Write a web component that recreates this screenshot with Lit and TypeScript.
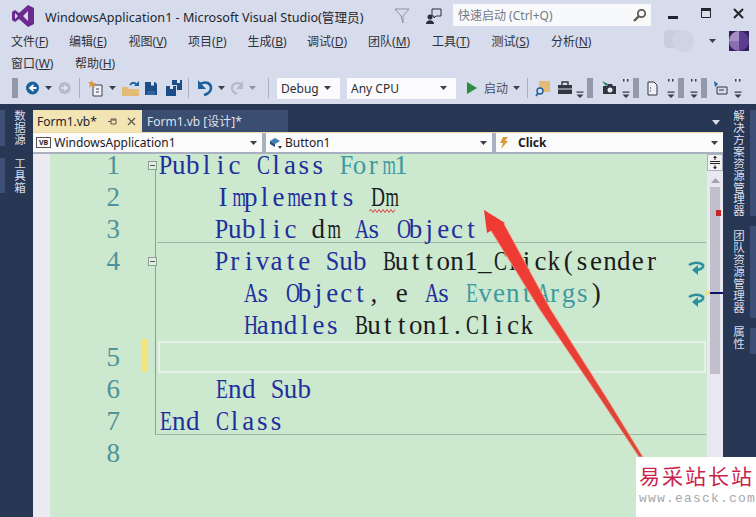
import { LitElement, html, css, svg } from "lit";
import { customElement } from "lit/decorators.js";

const caret = (c = "#3a3f4c") => html`<svg class="caret" width="7" height="4" viewBox="0 0 7 4"><path d="M0 0h7L3.500 4z" fill="${c}"/></svg>`;
const ovd = html`<svg class="ov" width="8" height="22" viewBox="0 0 8 22"><path d="M1 2h1.500v2.500H1zM5 2h1.500v2.500H5zM.5 14.500h7v1.300h-7zM.5 17.500h7L4 21z" fill="#3a3f4c"/></svg>`;
const ovn = html`<svg class="ov" width="8" height="22" viewBox="0 0 8 22"><path d="M.5 14.500h7v1.300h-7zM.5 17.500h7L4 21z" fill="#3a3f4c"/></svg>`;
const grip = html`<span class="grip"></span>`;
const I = (w: number, body: unknown) => html`<svg class="ic" width="${w}" height="18" viewBox="0 0 ${w} 18">${body}</svg>`;
const gap = (w: number) => html`<span class="gap" style="width:${w}px"></span>`;

const narrow = (c: string) => (c === "m" ? "ch x3" : "CDAOHBEG".includes(c) ? "ch x2" : "PFSk".includes(c) ? "ch x1" : "ch");
const mono = (t: string, cls = "") => html`<span class="${cls}">${[...t].map((c) => html`<span class="${narrow(c)}">${c}</span>`)}</span>`;
const wrapIc = html`<svg width="18" height="16" viewBox="0 0 18 16"><path d="M2 4c4-3 11-3 14 0 1 3-3 5-8 5" fill="none" stroke="#2a8f9e" stroke-width="2.500"/><path d="M11 4L5 9l6 5z" fill="#2a8f9e"/></svg>`;

@customElement("app-root")
export class AppRoot extends LitElement {
  static styles = css`
    :host { display: block; width: 756px; height: 517px; overflow: hidden; position: relative; background: #d6dcec; font-family: "Noto Sans", "Noto Sans CJK SC", sans-serif; color: #2a2d36; }
    .title { height: 32px; display: flex; align-items: center; }
    .logo { margin-left: 12px; width: 22px; height: 24px; }
    .ttext { margin-left: 11px; font-size: 12.600px; width: 344px; white-space: nowrap; color: #23252c; }
    .filter { margin-left: 5px; }
    .fb { margin-left: 16px; }
    .ql { margin-left: 11px; width: 198px; height: 22px; background: #f8f9fb; font-size: 12px; color: #767a84; display: flex; align-items: center; justify-content: space-between; padding: 0 4px 0 5px; box-sizing: border-box; margin-top: -2px; }
    .wbtn { width: 32.500px; display: flex; justify-content: center; }
    .wbtns { display: flex; margin-left: 6px; margin-top: -4px; }
    .menu { height: 22px; display: flex; font-size: 12px; align-items: center; padding-left: 11px; color: #30333c; position: relative; }
    .menu span.m { white-space: nowrap; }
    .menu u { text-underline-offset: 1px; }
    .r1 { margin-top: -2px; }
    .r1 .m { width: 59.500px; }
    .r1 .m:nth-child(1) { width: 58px; }
    .r1 .m:nth-child(6) { width: 61px; }
    .r1 .m:nth-child(7) { width: 64px; }
    .r2 .m { width: 64px; }
    .acct { position: absolute; right: 7px; top: 0; display: flex; align-items: center; gap: 8px; height: 22px; }
    .tb { height: 28px; display: flex; align-items: center; padding-left: 12px; box-sizing: border-box; }
    .ic { flex: none; }
    .gap { flex: none; }
    .grip { width: 6px; height: 20px; flex: none; background-image: radial-gradient(circle, #8e94a6 0.700px, transparent 0.800px); background-size: 2px 2px; }
    .sep { width: 1px; height: 20px; background: #a8afc0; flex: none; }
    .s1 { margin: 0 7px; }
    .s2 { margin: 0 7px 0 6px; }
    .s3 { margin: 0 8px 0 7px; }
    .s4 { margin: 0 7px 0 2px; }
    .caret { flex: none; margin: 0 5px; }
    .ov { flex: none; margin: 0 3px; }
    .combo { background: #fbfbfd; height: 21px; display: flex; align-items: center; justify-content: space-between; font-size: 12px; padding: 0 4px; box-sizing: border-box; flex: none; color: #2c2e35; }
    .cd { width: 63px; }
    .cc { width: 109px; }
    .start { margin-left: 7px; font-size: 12px; color: #4a4e58; flex: none; }
    .work { position: absolute; left: 0; right: 0; top: 104px; bottom: 0; z-index: 0; background: #283754; display: flex; }
    .lside { width: 33px; flex: none; display: flex; flex-direction: column; gap: 12px; padding-top: 6px; box-sizing: border-box; }
    .vt { writing-mode: vertical-rl; color: #d9dfee; font-size: 11.500px; letter-spacing: 0.400px; white-space: nowrap; height: fit-content; }
    .lt { display: flex; gap: 6px; }
    .lt i { width: 5px; background: #3d4f74; display: block; }
    .main { width: 690px; flex: none; display: flex; flex-direction: column; padding-top: 6px; box-sizing: border-box; min-height: 0; }
    .tabs { height: 22px; display: flex; font-size: 12px; align-items: center; position: relative; flex: none; }
    .tab { height: 22px; display: flex; align-items: center; box-sizing: border-box; padding-left: 4px; white-space: nowrap; }
    .tab.a { width: 109px; background: #f3e4b4; color: #22242a; gap: 10px; }
    .tab.a .pin { margin-left: 1px; }
    .tab.b { width: 146px; background: #3b4d70; color: #dde2ee; padding-left: 5px; }
    .tabmenu { position: absolute; right: 3px; top: 10px; }
    .nav { background: #fbfbfb; border-top: 1px solid #e9d9a9; border-bottom: 2px solid #a9b0bf; display: flex; font-size: 12px; color: #1f2025; flex: none; height: 19px; position: relative; z-index: 2; }
    .nc { display: flex; align-items: center; box-sizing: border-box; padding: 0 3px; gap: 3px; }
    .nc .caret { margin-left: auto; margin-right: 2px; }
    .n1 { width: 229px; }
    .n2 { width: 230px; border-left: 4px solid #a9b0bf; }
    .n3 { flex: 1; border-left: 4px solid #a9b0bf; }
    .vb { font-size: 7px; border: 1px solid #555; padding: 0 2px; line-height: 9px; font-weight: 700; }
    .bold { font-weight: 700; margin-left: 7px; }
    .ed { flex: 1; display: flex; min-height: 0; background: #cce8cf; }
    .gut { width: 17px; flex: none; background: #ecebf2; }
    .codearea { flex: 1; position: relative; min-width: 0; overflow: hidden; }
    .rows { margin-top: -5px; }
    .row { height: 32px; display: flex; align-items: center; position: relative; font-family: "Liberation Serif", serif; font-size: 27px; color: #1a1c1c; white-space: nowrap; }
    .ln { width: 73px; text-align: right; color: #4f9299; flex: none; padding-right: 3px; box-sizing: border-box; }
    .fold { width: 11px; flex: none; display: flex; justify-content: center; margin-left: 24px; }
    .ch { display: inline-block; width: 13.900px; text-align: center; }
    .x1 { transform: scaleX(0.9); }
    .x2 { transform: scaleX(0.72); }
    .x3 { transform: scaleX(0.64); }
    .indent1 { margin-left: 56px; }
    .indent1b { margin-left: 58px; }
    .indent2 { margin-left: 84px; }
    .k { color: #1f2f9c; }
    .t { color: #3f9aa0; }
    .sq { position: relative; display: inline-block; }
    .wave { position: absolute; left: 0; bottom: 0; }
    .wr { position: absolute; left: 637px; top: 8px; }
    .vline { position: absolute; left: 105px; top: 16px; width: 1px; height: 264px; background: #8aa090; }
    .hl { position: absolute; left: 107px; right: 1px; height: 1px; background: #9db5a3; }
    .h1 { top: 88px; }
    .h2 { top: 280px; left: 105px; }
    .cur { position: absolute; left: 108px; right: 1px; top: 187px; height: 28px; border: 2px solid #e6f2e7; }
    .yb { position: absolute; left: 91px; top: 185px; width: 7px; height: 33px; background: #f3e57b; border-radius: 2px; }
    .sb { width: 16px; flex: none; background: #e9e8f0; position: relative; z-index: 1; display: flex; flex-direction: column; align-items: center; }
    .split { width: 16px; height: 17px; border: 1px solid #a9b0bf; box-sizing: border-box; display: flex; align-items: center; justify-content: center; background: #f2f2f5; }
    .up { margin-top: 7px; }
    .thumb { width: 10px; height: 187px; background: #c2bfcd; margin-top: 4px; position: relative; }
    .mk { position: absolute; left: 6px; top: 23px; width: 5px; height: 6px; background: #c42727; }
    .mk2 { position: absolute; left: -3px; top: 105px; width: 16px; height: 2px; background: #0d0d6a; }
    .mk3 { position: absolute; left: -4px; top: 104px; width: 4px; height: 4px; background: #f0e27c; }
    .rside { flex: 1; position: relative; display: flex; padding: 6px 0 0 7px; box-sizing: border-box; flex-direction: column; gap: 13px; align-items: flex-start; }
    .rtabs { position: absolute; right: 0; width: 6px; background: #3d4f74; border-radius: 1px 0 0 1px; }
    .rt1 { top: 6px; height: 106px; }
    .rt2 { top: 122px; height: 92px; }
    .rt3 { top: 224px; height: 26px; }
    .over { position: absolute; left: 0; top: 0; pointer-events: none; z-index: 1; }
    .wm { position: absolute; left: 636px; top: 457px; width: 120px; height: 60px; background: #fff; box-sizing: border-box; padding: 4px 0 0 3px; overflow: hidden; z-index: 2; }
    .wm1 { font-family: "Noto Sans CJK SC", serif; font-size: 21px; color: #c8244c; letter-spacing: 2px; line-height: 28px; white-space: nowrap; }
    .wm2 { font-family: "Liberation Mono", monospace; font-size: 13px; color: #a8a8a8; letter-spacing: 1.200px; margin-top: 2px; white-space: nowrap; }
  `;

  render() {
    const menus1 = [["文件", "F"], ["编辑", "E"], ["视图", "V"], ["项目", "P"], ["生成", "B"], ["调试", "D"], ["团队", "M"], ["工具", "T"], ["测试", "S"], ["分析", "N"]];
    const menus2 = [["窗口", "W"], ["帮助", "H"]];
    const m = (a: string[]) => html`<span class="m">${a[0]}(<u>${a[1]}</u>)</span>`;
    const fold = (on: boolean) => html`<span class="fold">${on ? html`<svg width="9" height="9" viewBox="0 0 9 9"><rect x=".5" y=".5" width="8" height="8" fill="#dfeee0" stroke="#8aa090"/><path d="M2 4.500h5" stroke="#555"/></svg>` : ""}</span>`;
    return html`
      <div class="title">
        <svg class="logo" viewBox="0 0 22 24"><path d="M16 1l6 3v16l-6 3-9-8-4 3-3-2V8l3-2 4 3zM3 9v6l3-3zM16 7l-5 5 5 5z" fill="#6a2a8e"/></svg>
        <span class="ttext">WindowsApplication1 - Microsoft Visual Studio(管理员)</span>
        <svg class="filter" width="16" height="18" viewBox="0 0 16 18"><path d="M1 2h14L9 9v7L7 9z" fill="none" stroke="#8d94a6"/></svg>
        <svg class="fb" width="16" height="16" viewBox="0 0 16 16"><circle cx="4" cy="9" r="2.500" fill="#2b2e38"/><path d="M0 16c0-5 8-5 8 0z" fill="#2b2e38"/><path d="M6 1h9v7H10L8 10V8H6z" fill="none" stroke="#2b2e38"/></svg>
        <div class="ql"><span>快速启动 (Ctrl+Q)</span>
          <svg width="14" height="14" viewBox="0 0 14 14"><circle cx="8.500" cy="5.500" r="3.700" fill="none" stroke="#5f5a4e" stroke-width="1.800"/><path d="M6 8l-5 5" stroke="#5f5a4e" stroke-width="2.400"/></svg></div>
        <div class="wbtns">
          <span class="wbtn"><svg width="10" height="12" viewBox="0 0 10 12"><path d="M0 8h10v3H0z" fill="#23252c"/></svg></span>
          <span class="wbtn"><svg width="10" height="10" viewBox="0 0 10 10"><path d="M.5 2.500h9v7h-9z" fill="none" stroke="#23252c"/><path d="M0 0h10v3H0z" fill="#23252c"/></svg></span>
          <span class="wbtn"><svg width="11" height="11" viewBox="0 0 11 11"><path d="M1 1l9 9M10 1l-9 9" stroke="#23252c" stroke-width="2"/></svg></span>
        </div>
      </div>
      <div class="menu r1">${menus1.map(m)}
        <div class="acct"><svg width="32" height="22" viewBox="0 0 32 22"><rect x="0" y="0" width="18" height="18" rx="4" fill="#c8cedb"/><circle cx="19" cy="11" r="11" fill="#ced4e2"/></svg>${caret()}
          <svg width="20" height="20" viewBox="0 0 20 20"><rect width="20" height="20" fill="#33205a"/><circle cx="10" cy="10" r="10" fill="#5a3d8c"/><path d="M10 0a10 10 0 0 0-10 10h10z" fill="#a78fc6"/><path d="M0 10a10 10 0 0 0 10 10V10z" fill="#8a70b0"/></svg></div>
      </div>
      <div class="menu r2">${menus2.map(m)}</div>
      <div class="tb">
        ${grip}${gap(7)}
        ${I(15, svg`<circle cx="7.500" cy="9" r="6.500" fill="#1c5f9c"/><path d="M11.500 9H6M8.500 6L5 9l3.500 3" fill="none" stroke="#fff" stroke-width="1.800"/>`)}${caret()}
        ${I(15, svg`<circle cx="7.500" cy="9" r="6" fill="#b4bac8"/><path d="M4 9h5M7 6.500L10 9l-3 2.500" fill="none" stroke="#e4e7ef" stroke-width="1.600"/>`)}
        <span class="sep s1"></span>
        ${I(17, svg`<path d="M6 6h9v11H6z" fill="#eef0f6" stroke="#3f434e"/><path d="M5 1l1 3 3 0-2 2 1 3-3-2-3 1 1-3-2-2 3 0z" fill="#d99a3b"/><path d="M9 10h3M9 13h3" stroke="#3f434e"/>`)}${caret()}
        ${I(19, svg`<path d="M1 8h6l1 2h10v7H1z" fill="#e2bb77"/><path d="M9 6c2-3 5-3 7 0" fill="none" stroke="#1c5f9c" stroke-width="1.800"/><path d="M13 7h5V2z" fill="#1c5f9c"/>`)}
        ${gap(4)}
        ${I(14, svg`<path d="M1 3h10l2 2v11H1z" fill="#1c4d86"/><path d="M7 3h3v3.500H7z" fill="#dfe4ef"/><path d="M3 12h8v4H3z" fill="#2d63a0"/>`)}
        ${gap(7)}
        ${I(17, svg`<path d="M1 7h10v10H1z" fill="#1c4d86"/><path d="M7 1h10v10h-5V6H7z" fill="#1c4d86"/><path d="M12 1h3v3h-3zM5 7h3v3H5z" fill="#dfe4ef"/>`)}
        <span class="sep s2"></span>
        ${I(17, svg`<path d="M4 5c6-3 11-1 11 4 0 3-3 6-7 7" fill="none" stroke="#1c5f9c" stroke-width="2.600"/><path d="M2 1v9h8z" fill="#1c5f9c"/>`)}${caret()}
        ${I(14, svg`<path d="M11 5c-5-2-9 0-9 4 0 3 2 5 5 6" fill="none" stroke="#b4bac8" stroke-width="2.200"/><path d="M13 2v8H6z" fill="#b4bac8"/>`)}${caret("#8d94a6")}
        <span class="sep s3"></span>
        <div class="combo cd"><span>Debug</span>${caret()}</div>
        ${gap(7)}
        <div class="combo cc"><span>Any CPU</span>${caret()}</div>
        ${gap(11)}
        ${I(10, svg`<path d="M0 3l10 6-10 6z" fill="#2f8a3e"/>`)}
        <span class="start">启动</span>${caret()}
        <span class="sep s4"></span>
        ${I(16, svg`<path d="M4 2h11v11H4z" fill="#e2bb77"/><circle cx="5" cy="12" r="3" fill="#d6dcec" stroke="#1c5f9c" stroke-width="1.400"/><path d="M3 14l-2 3" stroke="#1c5f9c" stroke-width="1.600"/>`)}
        ${gap(6)}
        ${I(16, svg`<path d="M1 6h14v9H1z" fill="#33363f"/><path d="M5 6V3h6v3" fill="none" stroke="#33363f" stroke-width="1.400"/><path d="M1 10h14" stroke="#d6dcec"/>`)}
        ${ovn}${grip}${gap(8)}
        ${I(16, svg`<path d="M1 2l6 3-2 2z" fill="#1d7a5a"/><path d="M2 7h4l1-2h4l1 2h3v8H2z" fill="#33363f"/><circle cx="9" cy="11" r="2.500" fill="#e6e9f1"/>`)}
        ${gap(2)}${ovd}${grip}${gap(8)}
        ${I(11, svg`<path d="M1 3h6l3 3v10H1z" fill="#eef0f6" stroke="#33363f"/><path d="M3 9h1M3 12h1" stroke="#33363f"/>`)}
        ${gap(6)}${ovd}${grip}${gap(3)}${ovd}${grip}${gap(6)}
        ${I(15, svg`<path d="M1 2l4 3-3 3z" fill="#1c5f9c"/><path d="M4 8h10v7H4z" fill="none" stroke="#33363f"/><path d="M6 11h5" stroke="#33363f"/>`)}
        ${gap(3)}${ovd}
      </div>

      <div class="work">
        <div class="lside">
          <div class="lt"><i></i><span class="vt">数据源</span></div>
          <div class="lt"><i></i><span class="vt">工具箱</span></div>
        </div>
        <div class="main">
          <div class="tabs">
            <div class="tab a"><span>Form1.vb*</span>
              <svg class="pin" width="9" height="9" viewBox="0 0 9 9"><path d="M0 4.500h3M3 2v5h5V2zM3 3h5" fill="none" stroke="#5b5b4a"/></svg>
              <svg width="9" height="9" viewBox="0 0 9 9"><path d="M1 1l7 7M8 1l-7 7" stroke="#5b5b4a" stroke-width="1.300"/></svg>
            </div>
            <div class="tab b">Form1.vb [设计]*</div>
            <svg class="tabmenu" width="8" height="5" viewBox="0 0 8 5"><path d="M0 0h8L4 5z" fill="#d6dcec"/></svg>
          </div>
          <div class="nav">
            <div class="nc n1"><span class="vb">VB</span><span>WindowsApplication1</span>${caret()}</div>
            <div class="nc n2">
              <svg width="13" height="13" viewBox="0 0 13 13"><path d="M1 5l5-3 5 3-5 3z" fill="#3f7fb5"/><path d="M1 5v3l5 3V8z" fill="#1c4d86"/><path d="M9 10h4l-2 3z" fill="#333"/></svg>
              <span>Button1</span>${caret()}</div>
            <div class="nc n3">
              <svg width="9" height="12" viewBox="0 0 9 12"><path d="M4 0h5L6 4h3L2 12l2-6H1z" fill="#d9993b"/></svg>
              <span class="bold">Click</span>${caret()}</div>
          </div>
          <div class="ed">
            <div class="gut"></div>
            <div class="codearea">
              <div class="vline"></div>
              <div class="hl h1"></div>
              <div class="hl h2"></div>
              <div class="cur"></div>
              <div class="yb"></div>
              <div class="rows">
                <div class="row"><span class="ln">1</span>${fold(true)}<span>${mono("Public Class", "k")}<span class="ch"> </span>${mono("Form1", "t")}</span></div>
                <div class="row"><span class="ln">2</span>${fold(false)}<span class="indent1b">${mono("Implements", "k")}<span class="ch"> </span><span class="sq">${mono("Dm")}<svg class="wave" width="28" height="4" viewBox="0 0 28 4"><path d="M0 2l2-1.500 2 3 2-3 2 3 2-3 2 3 2-3 2 3 2-3 2 3 2-3 2 3 2-3" fill="none" stroke="#d8433c"/></svg></span></span></div>
                <div class="row"><span class="ln">3</span>${fold(false)}<span class="indent1">${mono("Public", "k")}<span class="ch"> </span>${mono("dm ")}${mono("As Object", "k")}</span></div>
                <div class="row"><span class="ln">4</span>${fold(true)}<span class="indent1">${mono("Private Sub", "k")}<span class="ch"> </span>${mono("Button1_Click(sender")}</span><span class="wr">${wrapIc}</span></div>
                <div class="row"><span class="ln"></span>${fold(false)}<span class="indent2">${mono("As Object", "k")}${mono(", e ")}${mono("As", "k")}<span class="ch"> </span>${mono("EventArgs", "t")}${mono(")")}</span><span class="wr">${wrapIc}</span></div>
                <div class="row"><span class="ln"></span>${fold(false)}<span class="indent2">${mono("Handles", "k")}<span class="ch"> </span>${mono("Button1.Click")}</span></div>
                <div class="row"><span class="ln">5</span></div>
                <div class="row"><span class="ln">6</span>${fold(false)}<span class="indent1">${mono("End Sub", "k")}</span></div>
                <div class="row"><span class="ln">7</span>${fold(false)}<span>${mono("End Class", "k")}</span></div>
                <div class="row"><span class="ln">8</span></div>
              </div>
            </div>
            <div class="sb">
              <div class="split"><svg width="12" height="13" viewBox="0 0 12 13"><path d="M1 5.500h10M1 7.500h10M6 0v4M6 13V9" stroke="#222"/><path d="M4 2l2-2 2 2zM4 11l2 2 2-2z" fill="#222"/></svg></div>
              <svg class="up" width="9" height="5" viewBox="0 0 9 5"><path d="M0 5h9L4.500 0z" fill="#a3a1b0"/></svg>
              <div class="thumb"><span class="mk"></span><span class="mk2"></span><span class="mk3"></span></div>
            </div>
          </div>
        </div>
        <div class="rside">
          <span class="vt">解决方案资源管理器</span>
          <span class="vt">团队资源管理器</span>
          <span class="vt">属性</span>
          <i class="rtabs rt1"></i><i class="rtabs rt2"></i><i class="rtabs rt3"></i>
        </div>
      </div>

      <svg class="over" width="756" height="517" viewBox="0 0 756 517">
        <defs><linearGradient id="ar" x1="484" y1="210" x2="640" y2="458" gradientUnits="userSpaceOnUse"><stop offset="0" stop-color="#ef3a34"/><stop offset=".55" stop-color="#ea3f36"/><stop offset="1" stop-color="#d44a3c"/></linearGradient></defs>
        <path d="M488 226L540 310 601 400 639 457 643 457 608 400 551 310 503 222z" fill="url(#ar)" stroke="#f3a98f" stroke-width=".8"/>
        <path d="M484 210L505 223 487 233z" fill="#ef3a34"/>
      </svg>
      <div class="wm"><div class="wm1">易采站长站</div><div class="wm2">www.easck.com</div></div>
    `;
  }
}
